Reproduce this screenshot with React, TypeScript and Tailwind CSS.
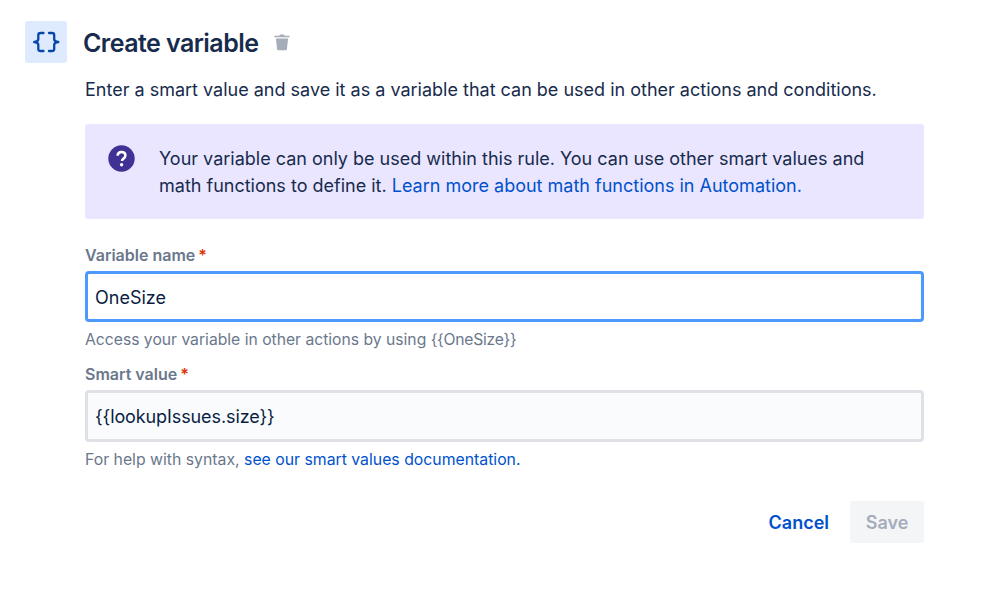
export default function App() {
  return (
    <div className="w-[999px] h-[609px] bg-white overflow-hidden font-['Inter',sans-serif] text-[#172b4d] pl-[25px] pt-[21px] pr-[75px]">
      <div className="flex items-center h-[42px]">
        <div className="w-[42px] h-[42px] rounded-[3px] bg-[#deebff] flex items-center justify-center">
          <svg width="28" height="22" viewBox="0 0 28 22" fill="none" stroke="#0747a6" strokeWidth="2.3" strokeLinecap="round" strokeLinejoin="round">
            <path d="M11.5 2H8.5C7 2 6.3 2.7 6.3 4V8.2C6.3 9.6 5.4 10.6 2.2 11C5.4 11.4 6.3 12.4 6.3 13.8V18C6.3 19.3 7 20 8.5 20H11.5" />
            <path d="M17 2H20C21.5 2 22.2 2.7 22.2 4V8.2C22.2 9.6 23.1 10.6 26.3 11C23.1 11.4 22.2 12.4 22.2 13.8V18C22.2 19.3 21.5 20 20 20H17" />
          </svg>
        </div>
        <h1 className="ml-[16px] pt-[2px] text-[25px] font-semibold leading-[30px] tracking-[-0.55px] text-[#172b4d]">Create variable</h1>
        <svg className="ml-[15px]" width="18" height="18" viewBox="0 0 18 18" fill="#a5adba">
          <path d="M7 1.5h4l.7 1.2H16c.4 0 .6.3.6.7v.9H1.4v-.9c0-.4.2-.7.6-.7h4.3z" />
          <path d="M2.9 5.6h12.2l-1.2 10.6c-.1.7-.5 1.1-1.2 1.1H5.3c-.7 0-1.1-.4-1.2-1.1z" />
        </svg>
      </div>
      <div className="ml-[60px]">
        <p className="mt-[15px] text-[18px] leading-[24px]">Enter a smart value and save it as a variable that can be used in other actions and conditions.</p>
        <div className="mt-[22px] h-[95px] rounded-[3px] bg-[#eae6ff] flex pl-[23px] pt-[21px]">
          <svg className="shrink-0" width="27" height="27" viewBox="0 0 27 27">
            <circle cx="13.5" cy="13.5" r="13.2" fill="#403294" />
            <path d="M9.6 10.8c.1-2.3 1.7-3.7 3.9-3.7 2.3 0 3.9 1.4 3.9 3.4 0 1.4-.7 2.3-1.9 3.1-1.1.7-1.4 1.1-1.4 2v.5" fill="none" stroke="#fff" strokeWidth="2.5" />
            <circle cx="13.6" cy="19.7" r="1.7" fill="#fff" />
          </svg>
          <p className="ml-[24px] text-[18px] leading-[27px] w-[730px]">
            Your variable can only be used within this rule. You can use other smart values and math functions to define it.{" "}
            <a className="text-[#0052cc]">Learn more about math functions in Automation.</a>
          </p>
        </div>
        <div className="mt-[25px] flex text-[16px] font-semibold leading-[22px] text-[#6b778c]">
          Variable name<span className="ml-[3px] text-[#de350b]">*</span>
        </div>
        <div className="mt-[5px] h-[51px] rounded-[4px] border-[3px] border-[#4c9aff] bg-white flex items-center pl-[7px] pt-[1px] text-[18px] text-[#091e42]">OneSize</div>
        <div className="mt-[6px] text-[15.7px] leading-[24px] text-[#6b778c]">Access your variable in other actions by using <span className="tracking-[-0.25px]">{"{{OneSize}}"}</span></div>
        <div className="mt-[11px] flex text-[16px] font-semibold leading-[22px] text-[#6b778c]">
          Smart value<span className="ml-[3px] text-[#de350b]">*</span>
        </div>
        <div className="mt-[5px] h-[52px] rounded-[4px] border-[3px] border-[#dfe1e6] bg-[#fafbfc] flex items-center pl-[7px] text-[18px] tracking-[-0.1px] text-[#091e42]">{"{{lookupIssues.size}}"}</div>
        <div className="mt-[6px] text-[15.8px] leading-[24px] text-[#6b778c]">
          For help with syntax, <a className="text-[#0052cc]">see our smart values documentation.</a>
        </div>
        <div className="mt-[29px] flex justify-end items-center">
          <button className="mr-[21px] text-[18px] font-semibold text-[#0052cc]">Cancel</button>
          <button className="w-[74px] h-[42px] rounded-[3px] bg-[#f4f5f7] text-[18px] font-semibold text-[#a5adba]">Save</button>
        </div>
      </div>
    </div>
  );
}
